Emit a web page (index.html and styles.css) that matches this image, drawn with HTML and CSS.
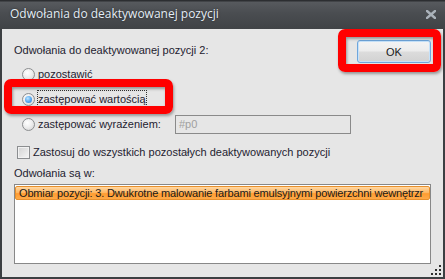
FILE: index.html
```html
<!DOCTYPE html>
<html lang="pl">
<head>
<meta charset="utf-8">
<title>Odwołania do deaktywowanej pozycji</title>
<link rel="stylesheet" href="styles.css">
</head>
<body>
<div class="window">
  <div class="titlebar">
    <span class="title">Odwołania do deaktywowanej pozycji</span>
    <svg class="close" width="10" height="9" viewBox="0 0 10 9"><path d="M1 1 L9 8 M9 1 L1 8" stroke="#aab2ba" stroke-width="2.4" stroke-linecap="square"/></svg>
  </div>
  <div class="client">
    <div class="top">
      <div class="options">
        <div class="label">Odwołania do deaktywowanej pozycji 2:</div>
        <div class="row"><span class="radio"></span><span class="text">pozostawić</span></div>
        <div class="row"><span class="radio checked"></span><span class="text focus">zastępować wartością</span></div>
        <div class="row"><span class="radio"></span><span class="text">zastępować wyrażeniem:</span><span class="input">#p0</span></div>
      </div>
      <button class="ok">OK</button>
    </div>
    <div class="check-row"><span class="checkbox"></span><span class="text">Zastosuj do wszystkich pozostałych deaktywowanych pozycji</span></div>
    <div class="label list-label">Odwołania są w:</div>
    <div class="list">
      <div class="item">Obmiar pozycji: 3. Dwukrotne malowanie farbami emulsyjnymi powierzchni wewnętrzr</div>
    </div>
    <svg class="grip" width="12" height="12" viewBox="0 0 12 12">
      <rect x="9" y="0" width="2" height="2" fill="#2e2e2e"/>
      <rect x="5" y="4" width="2" height="2" fill="#2e2e2e"/>
      <rect x="9" y="4" width="2" height="2" fill="#2e2e2e"/>
      <rect x="1" y="8" width="2" height="2" fill="#2e2e2e"/>
      <rect x="5" y="8" width="2" height="2" fill="#2e2e2e"/>
      <rect x="9" y="8" width="2" height="2" fill="#2e2e2e"/>
    </svg>
    <div class="mark mark-ok"></div>
    <div class="mark mark-radio"></div>
  </div>
</div>
</body>
</html>
```
FILE: styles.css
```css
* { box-sizing: border-box; }
html, body { margin: 0; padding: 0; }
body {
  width: 445px;
  height: 279px;
  overflow: hidden;
  background: #3a3c3f;
  font-family: "Liberation Sans", Arial, sans-serif;
  font-size: 11px;
  color: #1e2230;
}
.window {
  width: 445px;
  height: 279px;
  display: flex;
  flex-direction: column;
  background: #3c3f42;
}
.titlebar {
  height: 29px;
  flex: none;
  display: flex;
  align-items: center;
  padding: 0 9px 2px 10px;
  background: linear-gradient(#2c2e31 0, #2c2e31 1px, #575a5e 2px, #4a4d51 45%, #404346 100%);
}
.title {
  font-family: "Open Sans", "Liberation Sans", sans-serif;
  font-size: 12px;
  color: #e4edf6;
  text-shadow: 0 0 2px rgba(0,0,0,0.6);
  flex: 1;
}
.close { display: block; margin-top: 1px; }
.client {
  position: relative;
  flex: 1;
  margin: 0 2px 2px 2px;
  background: #e6e6e6;
  padding: 0 12px;
  display: flex;
  flex-direction: column;
}
.top {
  display: flex;
  align-items: flex-start;
}
.options {
  flex: 1;
  padding-top: 14px;
  display: flex;
  flex-direction: column;
}
.label {
  height: 14px;
  line-height: 14px;
  white-space: nowrap;
}
.row {
  height: 25px;
  display: flex;
  align-items: center;
  padding-left: 8px;
}
.options .label { margin-bottom: 5px; }
.radio {
  width: 13px;
  height: 13px;
  border-radius: 50%;
  border: 1px solid #8c8e90;
  background: radial-gradient(circle at 40% 35%, #ffffff 0, #eeeeee 45%, #cfcfcf 100%);
  position: relative;
  flex: none;
}
.radio.checked::after {
  content: "";
  position: absolute;
  left: 2px;
  top: 2px;
  width: 7px;
  height: 7px;
  border-radius: 50%;
  background: radial-gradient(circle at 40% 35%, #bfe6ff 0, #5aaaf0 50%, #2a74c8 100%);
}
.text {
  margin-left: 3px;
  white-space: nowrap;
  line-height: 13px;
}
.focus {
  margin-left: 2px;
  padding: 2px 0;
  border: 1px dotted #333;
}
.input {
  margin-left: 14px;
  width: 176px;
  height: 19px;
  border: 1px solid #8a8a8a;
  background: #e6e6e6;
  color: #a0a0a0;
  padding: 2px 3px;
  line-height: 13px;
}
.ok {
  margin-top: 11px;
  width: 74px;
  height: 23px;
  border: 1px solid #6fa6dc;
  border-radius: 3px;
  background: linear-gradient(#f4f4f4 0, #ececec 48%, #dcdcdc 52%, #d2d2d2 100%);
  box-shadow: inset 0 0 0 1px #c6e2fa;
  font-family: "Liberation Sans", Arial, sans-serif;
  font-size: 11px;
  color: #1a1a1a;
  padding: 0;
}
.check-row {
  margin-top: 9px;
  height: 13px;
  display: flex;
  align-items: center;
  padding-left: 3px;
}
.checkbox {
  width: 13px;
  height: 13px;
  border: 1px solid #8c8e90;
  background: linear-gradient(135deg, #d2d2d2, #f6f6f6);
  box-shadow: inset 0 0 0 1px #f2f2f2;
  flex: none;
}
.check-row .text { margin-left: 3px; }
.list-label { margin-top: 7px; }
.list {
  margin-top: 4px;
  height: 80px;
  border: 1px solid #888;
  background: #fff;
  padding: 1px 0 0 0;
  overflow: hidden;
}
.item {
  height: 14px;
  line-height: 12px;
  padding: 0 2px 0 3px;
  white-space: nowrap;
  overflow: hidden;
  letter-spacing: -0.16px;
  border: 1px solid #e8902c;
  border-radius: 2px;
  background: linear-gradient(#ffd8a4 0, #ffb45c 50%, #ff9c30 55%, #ffaa48 100%);
  color: #1a1a1a;
}
.grip {
  position: absolute;
  right: 1px;
  bottom: 0;
}
.mark {
  position: absolute;
  border: 8px solid #ff0000;
  border-radius: 7px;
  box-shadow: 1px 2px 3px rgba(0,0,0,0.35), inset 1px 2px 3px rgba(0,0,0,0.35);
}
.mark-ok {
  left: 336px;
  top: 0;
  width: 103px;
  height: 43px;
}
.mark-radio {
  left: 2px;
  top: 50px;
  width: 169px;
  height: 35px;
}
```
